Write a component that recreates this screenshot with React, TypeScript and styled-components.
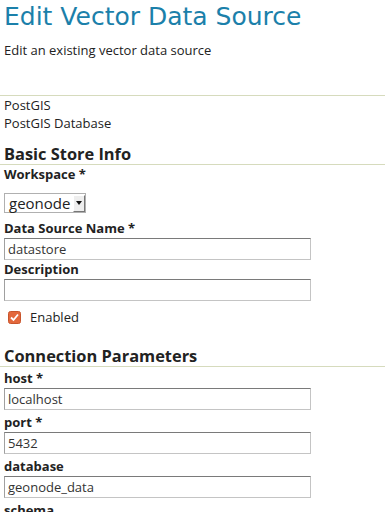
import React from "react";
import styled, { createGlobalStyle } from "styled-components";

const Global = createGlobalStyle`
  html, body { margin: 0; padding: 0; background: #fff; }
  body { font-family: "Open Sans", "DejaVu Sans", sans-serif; color: #222; }
`;

const Page = styled.div`
  padding: 0 0 0 4px;
  overflow: hidden;
  height: 512px;
`;

const Title = styled.h1`
  margin: 0;
  padding-top: 2px;
  font-family: "DejaVu Sans", sans-serif;
  font-weight: normal;
  font-size: 25px;
  line-height: 30px;
  color: #1b80aa;
`;

const Subtitle = styled.p`
  margin: 9px 0 0;
  font-size: 13px;
  line-height: 18px;
  color: #222;
`;

const Rule = styled.div<{ $top: number }>`
  margin: ${(p) => p.$top}px 0 0 -4px;
  height: 1px;
  background: #d6dbbd;
`;

const Line = styled.div`
  font-size: 13px;
  line-height: 18px;
  color: #222;
`;

const Section = styled.h2<{ $top: number }>`
  margin: ${(p) => p.$top}px 0 0 -4px;
  padding-left: 4px;
  font-size: 16.4px;
  font-weight: bold;
  line-height: 20px;
  color: #222;
  border-bottom: 1px solid #d6dbbd;
`;

const Label = styled.div<{ $top?: number }>`
  margin-top: ${(p) => p.$top ?? 0}px;
  font-size: 13px;
  font-weight: bold;
  line-height: 19px;
  color: #222;
`;

const Input = styled.div`
  box-sizing: border-box;
  width: 307px;
  height: 22px;
  border: 1px solid #c4c4c4;
  border-top-color: #7a7a7a;
  border-left-color: #a0a0a0;
  padding: 0 3px;
  font-size: 13px;
  line-height: 20px;
  color: #333;
`;

const Select = styled.div`
  margin-top: 9px;
  box-sizing: border-box;
  display: flex;
  align-items: center;
  width: 82px;
  height: 20px;
  border: 1px solid #b0b0b0;
  background: #fff;
  font-size: 15px;
  color: #222;
`;

const SelectText = styled.span`
  flex: 1;
  padding-left: 4px;
  line-height: 18px;
`;

const SelectArrow = styled.span`
  box-sizing: border-box;
  width: 12px;
  height: 17px;
  margin-right: 0;
  display: flex;
  align-items: center;
  justify-content: center;
  background: #eeeeee;
  border-top: 1px solid #fff;
  border-left: 1px solid #fff;
  border-right: 1px solid #777;
  border-bottom: 1px solid #777;
`;

const CheckRow = styled.div`
  margin-top: 7px;
  display: flex;
  align-items: center;
  gap: 9px;
  padding-left: 4px;
  font-size: 13px;
  line-height: 18px;
  color: #222;
`;

export default function App() {
  return (
    <>
      <Global />
      <Page>
        <Title>Edit Vector Data Source</Title>
        <Subtitle>Edit an existing vector data source</Subtitle>
        <Rule $top={36} />
        <Line>PostGIS</Line>
        <Line>PostGIS Database</Line>
        <Section $top={12}>Basic Store Info</Section>
        <Label>Workspace *</Label>
        <Select>
          <SelectText>geonode</SelectText>
          <SelectArrow>
            <svg width="6" height="4" viewBox="0 0 6 4">
              <path d="M0 0H6L3 4Z" fill="#111" />
            </svg>
          </SelectArrow>
        </Select>
        <Label $top={6}>Data Source Name *</Label>
        <Input>datastore</Input>
        <Label>Description</Label>
        <Input />
        <CheckRow>
          <svg width="13" height="13" viewBox="0 0 13 13">
            <rect x="0.5" y="0.5" width="12" height="12" rx="2" fill="#e3683c" stroke="#c8552c" />
            <path d="M3 6.5L5.5 9L10 3.5" stroke="#fff" strokeWidth="1.8" fill="none" />
          </svg>
          Enabled
        </CheckRow>
        <Section $top={20}>Connection Parameters</Section>
        <Label $top={2}>host *</Label>
        <Input>localhost</Input>
        <Label $top={3}>port *</Label>
        <Input>5432</Input>
        <Label $top={3}>database</Label>
        <Input>geonode_data</Input>
        <Label $top={3}>schema</Label>
      </Page>
    </>
  );
}
